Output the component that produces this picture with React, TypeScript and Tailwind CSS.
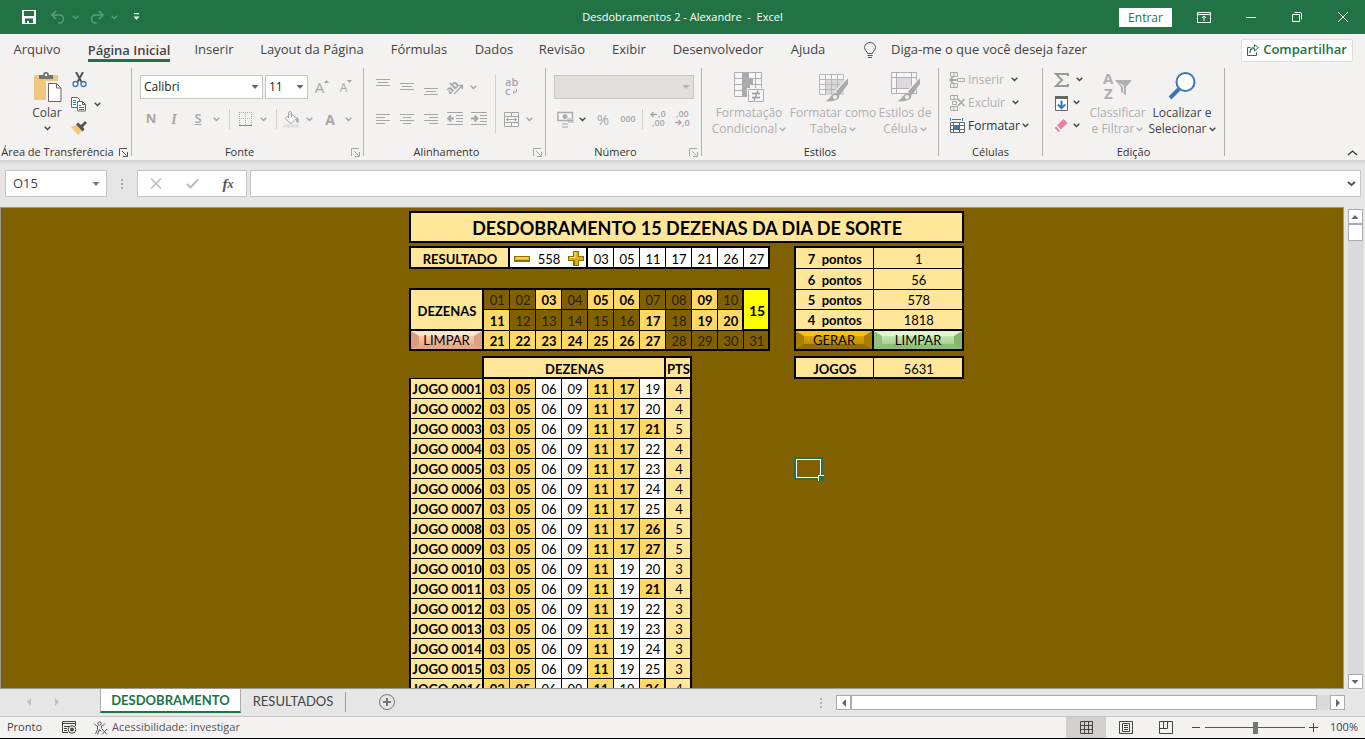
import type { ReactNode } from 'react'

const TABS = [
  { label: 'Arquivo', width: 'w-[72px]' },
  { label: 'Página Inicial', width: 'w-[112px]', active: true },
  { label: 'Inserir', width: 'w-[58px]' },
  { label: 'Layout da Página', width: 'w-[138px]' },
  { label: 'Fórmulas', width: 'w-[76px]' },
  { label: 'Dados', width: 'w-[74px]' },
  { label: 'Revisão', width: 'w-[62px]' },
  { label: 'Exibir', width: 'w-[72px]' },
  { label: 'Desenvolvedor', width: 'w-[106px]' },
  { label: 'Ajuda', width: 'w-[74px]' },
]

const RESULTADO = ['03', '05', '11', '17', '21', '26', '27']
const ESCOLHIDAS = [3, 5, 6, 9, 11, 17, 19, 20, 21, 22, 23, 24, 25, 26, 27]

// every game starts with 03 05 06 09 11
const JOGOS = [
  ['17', '19', 4],
  ['17', '20', 4],
  ['17', '21', 5],
  ['17', '22', 4],
  ['17', '23', 4],
  ['17', '24', 4],
  ['17', '25', 4],
  ['17', '26', 5],
  ['17', '27', 5],
  ['19', '20', 3],
  ['19', '21', 4],
  ['19', '22', 3],
  ['19', '23', 3],
  ['19', '24', 3],
  ['19', '25', 3],
  ['19', '26', 4],
] as const

const pad = (n: number, size = 2) => String(n).padStart(size, '0')

function Chevron({ className = 'text-[#444]' }: { className?: string }) {
  return (
    <svg className={`shrink-0 ${className}`} width="7" height="5" viewBox="0 0 7 5" fill="none" stroke="currentColor" strokeWidth="1.4">
      <path d="M.7.8 3.5 3.6 6.3.8" />
    </svg>
  )
}

function Triangle({ dir = 'down', className = 'text-[#666]' }: { dir?: 'up' | 'down' | 'left' | 'right'; className?: string }) {
  const paths = {
    up: 'M0.5 6h7L4 2z',
    down: 'M0.5 2h7L4 6z',
    left: 'M6 0v8L2 4z',
    right: 'M2 0v8l4-4z',
  }
  return (
    <svg className={className} width="8" height="8" viewBox="0 0 8 8" fill="currentColor">
      <path d={paths[dir]} />
    </svg>
  )
}

function Tool({ label, className = 'w-6', children }: { label: string; className?: string; children: ReactNode }) {
  return (
    <button type="button" aria-label={label} className={`flex h-6 shrink-0 items-center justify-center text-[#a6a6a6] ${className}`}>
      {children}
    </button>
  )
}

function Group({ label, className, launcher, dark, children }: {
  label: string
  className: string
  launcher?: boolean
  dark?: boolean
  children: ReactNode
}) {
  return (
    <section className={`flex h-[92px] shrink-0 ${className}`}>
      <div className="flex min-w-0 flex-1 flex-col">
        <div className="h-[76px]">{children}</div>
        <div className="flex h-4 items-center">
          <span className={`flex-1 whitespace-nowrap text-center text-[11px] text-[#333] ${launcher ? 'pr-1' : ''}`}>{label}</span>
          {launcher && (
            <button type="button" aria-label={`Opções de ${label}`} className={`mr-[3px] ${dark ? 'text-[#555]' : 'text-[#a6a6a6]'}`}>
              <svg width="9" height="9" viewBox="0 0 9 9" fill="none" stroke="currentColor">
                <path d="M.5 8V.5H8M3 3l4.500 4.500M8.500 4v4.500H4" />
              </svg>
            </button>
          )}
        </div>
      </div>
      <div className="h-[88px] w-px bg-[#b3b0ad]" />
    </section>
  )
}

function Lines({ kind }: { kind: 'top' | 'middle' | 'bottom' | 'left' | 'center' | 'right' }) {
  const paths = {
    top: 'M1 .5h14M3 3.500h10M1 6.500h14',
    middle: 'M1 4.500h14M3 7.500h10M1 10.500h14',
    bottom: 'M1 9.500h14M3 12.500h10M1 15.500h14',
    left: 'M1 3.500h14M1 6.500h9M1 9.500h14M1 12.500h9',
    center: 'M1 3.500h14M4 6.500h8M1 9.500h14M4 12.500h8',
    right: 'M1 3.500h14M6 6.500h9M1 9.500h14M6 12.500h9',
  }
  return (
    <svg width="16" height="16" viewBox="0 0 16 16" stroke="currentColor" fill="none">
      <path d={paths[kind]} />
    </svg>
  )
}

function Indent({ back }: { back?: boolean }) {
  return (
    <svg width="16" height="16" viewBox="0 0 16 16" stroke="currentColor" fill="none">
      <path d="M0 1.500h16M9 4.500h7M9 7.500h7M9 10.500h7M0 13.500h16" />
      <path strokeWidth="1.800" d={back ? 'M7 7.500H1M4 4.500l-3 3 3 3' : 'M0 7.500h6M3.500 4.500l3 3-3 3'} />
    </svg>
  )
}

function TitleBar() {
  return (
    <header className="flex h-[34px] shrink-0 items-center bg-[#217346] text-white">
      <div className="flex w-[475px] shrink-0 items-center pl-[22px]">
        <button type="button" aria-label="Salvar">
          <svg width="14" height="14" viewBox="0 0 14 14">
            <path fill="#fff" fillRule="evenodd" d="M0 0h14v14H0zM2 1v5h10V1zM3 8.500V13h2v-2h2v2h4V8.500z" />
          </svg>
        </button>
        <button type="button" aria-label="Desfazer" className="ml-[14px] flex items-center gap-1.5 text-[#5b9b78]">
          <svg width="16" height="14" viewBox="0 0 16 14" fill="none" stroke="currentColor" strokeWidth="1.600">
            <path d="M6 1 2 5l4 4M2 5h7.500a4 4 0 0 1 0 8H8" />
          </svg>
          <Chevron className="text-[#5b9b78]" />
        </button>
        <button type="button" aria-label="Refazer" className="ml-[10px] flex items-center gap-1.5 text-[#5b9b78]">
          <svg width="16" height="14" viewBox="0 0 16 14" fill="none" stroke="currentColor" strokeWidth="1.600">
            <path d="m10 1 4 4-4 4M14 5H6.500a4 4 0 0 0 0 8H8" />
          </svg>
          <Chevron className="text-[#5b9b78]" />
        </button>
        <button type="button" aria-label="Personalizar" className="ml-[15px]">
          <svg width="7" height="8" viewBox="0 0 7 8" fill="#fff">
            <path d="M1 0h5v1.200H1zM.5 3.500h6L3.500 7z" />
          </svg>
        </button>
      </div>
      <h1 className="flex-1 whitespace-pre text-center text-[11px]">Desdobramentos 2 - Alexandre  -  Excel</h1>
      <div className="flex w-[475px] shrink-0 items-center justify-end">
        <button type="button" className="h-[19px] w-[53px] bg-white text-[12px] leading-[19px] text-[#217346]">Entrar</button>
        <button type="button" aria-label="Opções da faixa" className="ml-[25px]">
          <svg width="14" height="11" viewBox="0 0 14 11" fill="none" stroke="#fff">
            <path d="M.5.5h13v10H.5zM.5 2.500h13M7 9V4M4.800 6 7 3.800 9.200 6" />
          </svg>
        </button>
        <button type="button" aria-label="Minimizar" className="ml-[35px]">
          <span className="block h-px w-[10px] bg-white" />
        </button>
        <button type="button" aria-label="Restaurar" className="ml-[36px]">
          <svg width="10" height="10" viewBox="0 0 10 10" fill="none" stroke="#fff">
            <path d="M.5 2.500h7v7h-7zM2.500.5h6a1 1 0 0 1 1 1v6" />
          </svg>
        </button>
        <button type="button" aria-label="Fechar" className="mr-[17px] ml-[36px]">
          <svg width="10" height="10" viewBox="0 0 10 10" fill="none" stroke="#fff">
            <path d="m0 0 10 10M10 0 0 10" />
          </svg>
        </button>
      </div>
    </header>
  )
}

function TabBar() {
  return (
    <nav className="flex h-8 items-center pl-px text-[13px] text-[#444]">
      {TABS.map((tab) => (
        <button key={tab.label} type="button" className={`flex shrink-0 justify-center whitespace-nowrap ${tab.width}`}>
          {tab.active ? (
            <span className="border-b-[3px] border-[#217346] pt-[3px] leading-[18px] font-semibold">{tab.label}</span>
          ) : (
            tab.label
          )}
        </button>
      ))}
      <button type="button" className="ml-[19px] flex items-center gap-[15px] whitespace-nowrap">
        <svg width="12" height="17" viewBox="0 0 12 17" fill="none" stroke="#555">
          <path d="M3.500 11.500c0-2-3-3-3-6a5.500 5 0 0 1 11 0c0 3-3 4-3 6zM3.500 13.500h5M4 15.500h4" />
        </svg>
        Diga-me o que você deseja fazer
      </button>
      <button type="button" className="mr-3 ml-auto flex h-[23px] w-[112px] items-center justify-center gap-1 rounded-[2px] border border-[#e1dfdd] bg-white font-semibold text-[#217346]">
        <svg width="12" height="12" viewBox="0 0 12 12" fill="none" stroke="currentColor">
          <path d="M3.500 3.500h-3v8h9v-3M3 8.500c.5-3 2-4 4.500-4V7L11.500 3.500 7.500.7V3C4.500 3 3 5 3 8.500z" />
        </svg>
        Compartilhar
      </button>
    </nav>
  )
}

function ClipboardGroup() {
  return (
    <Group label="Área de Transferência" className="w-[132px]" launcher dark>
      <div className="flex pl-[28px]">
        <button type="button" className="flex w-[38px] flex-col items-center pt-1 text-[12px] text-[#444]">
          <svg width="30" height="31" viewBox="0 0 30 31">
            <path fill="#efc87d" d="M2 3h24v25H2z" />
            <path fill="#737373" d="M7 7V3h4a3 3 0 0 1 6 0h4v4z" />
            <circle cx="14" cy="3" r="1.200" fill="#fff" />
            <path fill="#fff" stroke="#f3f2f1" strokeWidth="2" d="M15 10h15v20H15z" />
            <path fill="#fff" stroke="#666" d="M16.500 11.500h8l4.500 4.500v13.500H16.500zM24.500 11.500V16H29" />
          </svg>
          <span className="mt-px mb-1 leading-[18px]">Colar</span>
          <Chevron />
        </button>
        <div className="ml-[3px] flex flex-col">
          <Tool label="Recortar" className="w-5">
            <svg width="15" height="16" viewBox="0 0 15 16" fill="none">
              <path stroke="#555" strokeWidth="2" d="m4 0 5.500 10M11 0 5.500 10" />
              <circle cx="3.500" cy="12" r="2.500" stroke="#3b77b6" strokeWidth="1.300" />
              <circle cx="11.500" cy="12" r="2.500" stroke="#3b77b6" strokeWidth="1.300" />
            </svg>
          </Tool>
          <div className="flex">
            <Tool label="Copiar" className="w-5">
              <svg width="16" height="15" viewBox="0 0 16 15" fill="#fff" stroke="#666">
                <path d="M.5.5h6l2 2v8h-8z" />
                <path d="M6.500 4.500h5l3 3v6.500h-8zM11.500 4.500v3h3" />
                <path stroke="#3b77b6" d="M2 3.500h3M2 5.500h3M2 7.500h3M8 8.500h2M8 10.500h5M8 12.500h5" />
              </svg>
            </Tool>
            <Tool label="Opções de cópia" className="w-4">
              <Chevron />
            </Tool>
          </div>
          <Tool label="Pincel de Formatação" className="w-5">
            <svg width="16" height="14" viewBox="0 0 16 14">
              <path fill="#efc87d" d="m0 6 5-2 6 6-4 4z" />
              <path fill="#555" d="m5 3.500 2-2 3 2.500L14 0l2 2-4 4 1.500 2.500-2 2z" />
            </svg>
          </Tool>
        </div>
      </div>
    </Group>
  )
}

function FontGroup() {
  return (
    <Group label="Fonte" className="w-[232px]" launcher>
      <div className="flex flex-col gap-2 pt-[7px] pl-2">
        <div className="flex items-center">
          <button type="button" className="flex h-6 w-[123px] items-center justify-between border border-[#c8c6c4] bg-white px-[3px] text-[12px] text-[#222]">
            Calibri <Triangle />
          </button>
          <button type="button" className="ml-0.5 flex h-6 w-[43px] items-center justify-between border border-[#c8c6c4] bg-white px-[3px] text-[12px] text-[#222]">
            11 <Triangle />
          </button>
          <Tool label="Aumentar fonte" className="ml-0.5 w-6">
            <span className="text-[15px]">A</span>
            <svg className="mb-3" width="5" height="3" viewBox="0 0 5 3" fill="currentColor"><path d="M0 3h5L2.500 0z" /></svg>
          </Tool>
          <Tool label="Diminuir fonte" className="w-6">
            <span className="mt-0.5 text-[12px]">A</span>
            <svg className="mb-3" width="5" height="3" viewBox="0 0 5 3" fill="currentColor"><path d="M0 0h5L2.500 3z" /></svg>
          </Tool>
        </div>
        <div className="flex items-center">
          <Tool label="Negrito" className="w-[22px]"><b className="text-[13px]">N</b></Tool>
          <Tool label="Itálico"><i className="font-['Liberation_Serif',serif] text-[14px] font-bold">I</i></Tool>
          <Tool label="Sublinhado"><u className="text-[13px] font-semibold">S</u></Tool>
          <Tool label="Opções de sublinhado" className="w-3"><Chevron className="text-[#a6a6a6]" /></Tool>
          <span className="mx-[7px] h-5 w-px bg-[#d0cecc]" />
          <Tool label="Bordas" className="w-4">
            <svg width="13" height="14" viewBox="0 0 13 14" fill="none" stroke="#aaa">
              <path strokeDasharray="1 1" d="M.5 0v13M6.500 0v13M12.500 0v13M0 .5h13M0 6.500h13" />
              <path stroke="#888" d="M0 13.500h13" />
            </svg>
          </Tool>
          <Tool label="Opções de bordas" className="w-5"><Chevron className="text-[#a6a6a6]" /></Tool>
          <span className="mr-1 ml-[3px] h-5 w-px bg-[#d0cecc]" />
          <Tool label="Cor de preenchimento" className="w-5">
            <svg width="16" height="17" viewBox="0 0 16 17" fill="none" stroke="#aaa">
              <path fill="#f8f6f8" d="m2 7.500 6-5 5.500 5L8 12.500zM5.500 7V2a1.500 1.500 0 0 1 3 0v4" />
              <path fill="#aaa" d="M14 6.500c2 2 1.500 5 .5 5s-1-2-.5-5z" />
              <path stroke="#e1dfdd" strokeWidth="3" d="M0 15h16" />
            </svg>
          </Tool>
          <Tool label="Opções de preenchimento" className="w-4"><Chevron className="text-[#a6a6a6]" /></Tool>
          <Tool label="Cor da fonte" className="ml-px w-6"><b className="text-[14px]">A</b></Tool>
          <Tool label="Opções de cor" className="w-3"><Chevron className="text-[#a6a6a6]" /></Tool>
        </div>
      </div>
    </Group>
  )
}

function AlignGroup() {
  return (
    <Group label="Alinhamento" className="w-[182px]" launcher>
      <div className="flex pt-[7px] pl-[7px]">
        <div className="flex w-[124px] flex-col gap-2">
          <div className="flex">
            <Tool label="Alinhar acima"><Lines kind="top" /></Tool>
            <Tool label="Alinhar ao meio"><Lines kind="middle" /></Tool>
            <Tool label="Alinhar abaixo"><Lines kind="bottom" /></Tool>
            <Tool label="Orientação">
              <svg className="overflow-visible" width="18" height="17" viewBox="0 0 18 17" fill="none" stroke="currentColor">
                <text x="-1" y="12" fontSize="11" fontWeight="700" fill="currentColor" stroke="none" transform="rotate(-45 6 8)">ab</text>
                <path strokeWidth="1.300" d="m8 15 8.500-8.500M12.500 6.500h4V10" />
              </svg>
            </Tool>
            <Tool label="Opções de orientação" className="w-3"><Chevron className="text-[#a6a6a6]" /></Tool>
          </div>
          <div className="flex">
            <Tool label="Alinhar à esquerda"><Lines kind="left" /></Tool>
            <Tool label="Centralizar"><Lines kind="center" /></Tool>
            <Tool label="Alinhar à direita"><Lines kind="right" /></Tool>
            <Tool label="Diminuir recuo"><Indent back /></Tool>
            <Tool label="Aumentar recuo"><Indent /></Tool>
          </div>
        </div>
        <span className="h-[58px] w-px bg-[#d0cecc]" />
        <div className="flex flex-col gap-2 pl-[3px]">
          <Tool label="Quebrar texto">
            <svg className="overflow-visible" width="13" height="18" viewBox="0 0 13 18" fill="none" stroke="currentColor">
              <text x="0" y="8" fontSize="11" fontWeight="600" fill="currentColor" stroke="none">ab</text>
              <text x="0" y="17" fontSize="11" fontWeight="600" fill="currentColor" stroke="none">c</text>
              <path d="M11.500 11v3H8M9.500 12.500 8 14l1.500 1.500" />
            </svg>
          </Tool>
          <div className="flex">
            <Tool label="Mesclar e centralizar">
              <svg width="15" height="15" viewBox="0 0 15 15" fill="none" stroke="currentColor">
                <path d="M.5.5h14v14H.5zM.5 4.500h14M.5 10.500h14M7.500.5v4M7.500 10.500v4M2.500 7.500h10M4.500 5.500l-2 2 2 2M10.500 5.500l2 2-2 2" />
              </svg>
            </Tool>
            <Tool label="Opções de mesclagem" className="w-3"><Chevron className="text-[#a6a6a6]" /></Tool>
          </div>
        </div>
      </div>
    </Group>
  )
}

function NumberGroup() {
  return (
    <Group label="Número" className="w-[156px]" launcher>
      <div className="flex flex-col gap-2 pt-[7px] pl-2">
        <button type="button" aria-label="Formato de número" className="flex h-6 w-[140px] items-center justify-end border border-[#c8c6c4] bg-[#e1dfdd] pr-[3px]">
          <Triangle className="text-[#b5b3b1]" />
        </button>
        <div className="flex items-center">
          <Tool label="Contabilização" className="w-[22px]">
            <svg width="17" height="17" viewBox="0 0 17 17" fill="none" stroke="#aaa">
              <path strokeWidth="1.500" fill="#f8f6f8" d="M1 1.500h14.500v8H1z" />
              <circle cx="8" cy="5.500" r="2" fill="#aaa" />
              <path stroke="#ccc" strokeWidth="2" d="M10 8h6M11 11h6M5 13h6M5 16h6" />
            </svg>
          </Tool>
          <Tool label="Opções de moeda" className="w-3"><Chevron /></Tool>
          <Tool label="Porcentagem" className="w-[30px]"><span className="text-[15px]">%</span></Tool>
          <Tool label="Milhares" className="w-5"><span className="text-[9px] font-semibold">000</span></Tool>
          <span className="mr-[3px] ml-1 h-5 w-px bg-[#d0cecc]" />
          <Tool label="Aumentar casas decimais">
            <svg className="overflow-visible" width="15" height="16" viewBox="0 0 15 16" fill="none" stroke="currentColor">
              <text x="7" y="6" fontSize="9" fontWeight="600" fill="currentColor" stroke="none">,0</text>
              <text x="1" y="15" fontSize="9" fontWeight="600" fill="currentColor" stroke="none">,00</text>
              <path strokeWidth="1.300" d="M6 3.500H0M2.500 1 0 3.500 2.500 6" />
            </svg>
          </Tool>
          <Tool label="Diminuir casas decimais">
            <svg className="overflow-visible" width="15" height="16" viewBox="0 0 15 16" fill="none" stroke="currentColor">
              <text x="1" y="6" fontSize="9" fontWeight="600" fill="currentColor" stroke="none">,00</text>
              <text x="7" y="15" fontSize="9" fontWeight="600" fill="currentColor" stroke="none">,0</text>
              <path strokeWidth="1.300" d="M0 11.500h6M3.500 9 6 11.500 3.500 14" />
            </svg>
          </Tool>
        </div>
      </div>
    </Group>
  )
}

function BigTool({ lines, className, dark, children }: { lines: [string, string]; className: string; dark?: boolean; children: ReactNode }) {
  return (
    <button type="button" className={`flex shrink-0 flex-col items-center pt-1 text-[12px] leading-4 whitespace-nowrap ${className} ${dark ? 'text-[#444]' : 'text-[#b1afad]'}`}>
      <span className="flex h-[33px] items-start">{children}</span>
      <span>{lines[0]}</span>
      <span className="flex items-center gap-0.5">
        {lines[1]} <Chevron className={dark ? 'text-[#444]' : 'text-[#b1afad]'} />
      </span>
    </button>
  )
}

function Brush() {
  return (
    <>
      <path stroke="#f3f2f1" strokeWidth="6" d="M18 22 31 8" />
      <path fill="#aaa" stroke="none" d="M30 6v6l-8 11-4-3.500zM17 21c4-1 6 3 3 6-3 2-9 3-13 2 5-1 5-6 10-8z" />
      <circle cx="17" cy="25" r="2" fill="#f3f2f1" stroke="none" />
    </>
  )
}

function StylesGroup() {
  return (
    <Group label="Estilos" className="w-[237px]">
      <div className="flex pl-[5px]">
        <BigTool lines={['Formatação', 'Condicional']} className="w-[84px]">
          <svg width="31" height="31" viewBox="0 0 31 31" fill="#f8f4f8" stroke="#b0aeb0">
            <path d="M.5.5h27v24H.5zM.5 6.500h27M.5 12.500h27M.5 18.500h27M8.500.5v24M14.500.5v24M21.500.5v24" />
            <path fill="#aaa" stroke="none" d="M8 1h6v5H8zM8 7h11v5H8zM8 13h8v5H8zM8 19h5v5H8z" />
            <path stroke="#f3f2f1" strokeWidth="3" d="M14.500 17.500h15v12h-15z" />
            <path d="M14.500 17.500h15v12h-15z" />
            <path stroke="#999" strokeWidth="1.300" d="M18 21.500h8M18 25.500h8M24 18.500l-4 10" />
          </svg>
        </BigTool>
        <BigTool lines={['Formatar como', 'Tabela']} className="w-[84px]">
          <svg width="31" height="31" viewBox="0 0 31 31" fill="#f8f4f8" stroke="#b8b6b8">
            <path d="M1.500 2.500h24v20h-24z" />
            <path fill="#d8d6d8" stroke="none" d="M8 8h18v15H8z" />
            <path d="M1.500 7.500h24M1.500 12.500h24M1.500 17.500h24M7.500 2.500v20M13.500 2.500v20M19.500 2.500v20" />
            <Brush />
          </svg>
        </BigTool>
        <BigTool lines={['Estilos de', 'Célula']} className="w-[60px]">
          <svg width="31" height="31" viewBox="0 0 31 31" fill="#f8f4f8" stroke="#b0aeb0">
            <path d="M1.500.5h25v21h-25zM1.500 5.500h25M1.500 16.500h25M6.500.5v21M21.500.5v21" />
            <path fill="#ddd8dd" stroke="none" d="M7 6h14v10H7z" />
            <Brush />
          </svg>
        </BigTool>
      </div>
    </Group>
  )
}

function CellsGroup() {
  return (
    <Group label="Células" className="w-[104px]">
      <div className="flex flex-col items-start pl-[10px] text-[12px]">
        <button type="button" className="flex h-[23px] items-center gap-0.5 text-[#b1afad]">
          <svg width="17" height="16" viewBox="0 0 17 16" fill="none" stroke="#aaa">
            <path d="M1.500.5h7v4h-7zM5 .5v4M1.500 11.500h7v4h-7zM5 11.500v4M8.500 6.500h7v3h-7z" />
            <path strokeWidth="1.800" d="M8 8H1M4 5 1 8l3 3" />
          </svg>
          <span className="mr-[5px]">Inserir</span>
          <Chevron />
        </button>
        <button type="button" className="flex h-[23px] items-center gap-0.5 text-[#b1afad]">
          <svg width="17" height="16" viewBox="0 0 17 16" fill="none" stroke="#aaa">
            <path d="M1.500.5h7v4h-7zM5 .5v4M1.500 11.500h7v4h-7zM5 11.500v4M3.500 6.500h4v3h-4z" />
            <path strokeWidth="1.800" d="m9 4 6.500 7M15.500 4 9 11" />
          </svg>
          <span className="mr-[5px]">Excluir</span>
          <Chevron />
        </button>
        <button type="button" className="flex h-[23px] items-center gap-0.5 text-[#333]">
          <svg width="17" height="16" viewBox="0 0 17 16" fill="none" stroke="#666">
            <path fill="#fff" d="M1.500 4.500h14v10h-14zM1.500 7.500h14M1.500 11.500h14M4.500 4.500v10M10.500 4.500v10" />
            <path fill="#3b77b6" stroke="none" d="M4 7h6v5H4z" />
            <path stroke="#3b77b6" d="M1.500 0v3M13.500 0v3M3 1.500h9" />
          </svg>
          <span>Formatar</span>
          <Chevron />
        </button>
      </div>
    </Group>
  )
}

function EditGroup() {
  return (
    <Group label="Edição" className="w-[182px]">
      <div className="flex">
        <div className="flex w-[43px] flex-col pl-[10px]">
          <button type="button" aria-label="AutoSoma" className="flex h-[23px] items-center gap-1.5">
            <svg width="17" height="16" viewBox="0 0 17 16" fill="none" stroke="#999" strokeWidth="2">
              <path d="M15 4V2H3l6 6-6 6h12v-2" />
            </svg>
            <Chevron />
          </button>
          <button type="button" aria-label="Preencher" className="flex h-[23px] items-center gap-1">
            <svg width="16" height="16" viewBox="0 0 16 16" fill="none">
              <path fill="#fff" stroke="#666" d="M2.500 1.500h12v14h-12z" />
              <path fill="#666" d="M2 1h13v3H2z" />
              <path stroke="#3b77b6" strokeWidth="2" d="M8.500 5.500V13M4.800 9.500l3.700 3.700 3.700-3.700" />
            </svg>
            <Chevron />
          </button>
          <button type="button" aria-label="Limpar" className="flex h-[23px] items-center gap-1">
            <svg width="16" height="16" viewBox="0 0 16 16">
              <path fill="#e8839b" d="m10.500 1 4 4L8 11.500l-4-4zM3 8.500l4 4L5.500 14l-4-4z" />
            </svg>
            <Chevron />
          </button>
        </div>
        <BigTool lines={['Classificar', 'e Filtrar']} className="w-[63px]">
          <svg width="30" height="30" viewBox="0 0 30 30" fill="none">
            <g fill="#b0aeb0" fontSize="15" fontWeight="700">
              <text x="0" y="12">A</text>
              <text x="1" y="27">Z</text>
            </g>
            <path fill="#b0aeb0" d="M12 8h17l-6 7v8l-5-3v-5z" />
            <path fill="#f3f2f1" d="m15 10 5 5v5l1 1v-7z" />
          </svg>
        </BigTool>
        <BigTool lines={['Localizar e', 'Selecionar']} className="w-[66px]" dark>
          <svg width="28" height="28" viewBox="0 0 28 28" fill="none" stroke="#3b77b6">
            <path strokeWidth="4" d="m2 26 9-9" />
            <circle cx="17.500" cy="10" r="9" strokeWidth="2" fill="#fff" />
          </svg>
        </BigTool>
      </div>
    </Group>
  )
}

function Ribbon() {
  return (
    <div className="shrink-0 bg-[#f3f2f1]">
      <TabBar />
      <div className="flex pt-0.5">
        <ClipboardGroup />
        <FontGroup />
        <AlignGroup />
        <NumberGroup />
        <StylesGroup />
        <CellsGroup />
        <EditGroup />
        <button type="button" aria-label="Recolher faixa" className="mr-[7px] mb-1 ml-auto self-end">
          <svg width="11" height="6" viewBox="0 0 11 6" fill="none" stroke="#333" strokeWidth="1.300">
            <path d="m1 5 4.500-4L10 5" />
          </svg>
        </button>
      </div>
    </div>
  )
}

function FormulaBar() {
  return (
    <div className="flex h-[47px] shrink-0 items-center bg-linear-to-b from-[#cfcfcf] to-[#e6e6e6] to-10% pr-1 pl-[5px]">
      <button type="button" aria-label="Caixa de nome" className="flex h-[27px] w-[102px] items-center justify-between border border-[#c6c6c6] bg-white pr-1.5 pl-[7px] text-[13px] text-[#444]">
        O15 <Triangle className="text-[#777]" />
      </button>
      <span className="flex w-[30px] flex-col items-center gap-0.5">
        <i className="size-0.5 bg-[#aaa]" />
        <i className="size-0.5 bg-[#aaa]" />
        <i className="size-0.5 bg-[#aaa]" />
      </span>
      <div className="flex h-[27px] w-[110px] items-center border border-[#c6c6c6] bg-white">
        <button type="button" aria-label="Cancelar" className="flex w-9 justify-center">
          <svg width="12" height="11" viewBox="0 0 12 11" stroke="#bbb" strokeWidth="1.500"><path d="m1 .5 10 10M11 .5l-10 10" /></svg>
        </button>
        <button type="button" aria-label="Inserir" className="flex w-9 justify-center">
          <svg width="13" height="11" viewBox="0 0 13 11" fill="none" stroke="#bbb" strokeWidth="2"><path d="m1 6 3.500 3.500L12 1.500" /></svg>
        </button>
        <button type="button" aria-label="Inserir função" className="flex w-9 justify-center font-['Liberation_Serif',serif] text-[15px] leading-4 font-bold text-[#555] italic">
          f<span className="text-[12px]">x</span>
        </button>
      </div>
      <div className="ml-[3px] flex h-[27px] min-w-0 flex-1 items-center border border-[#c6c6c6] bg-white pr-1">
        <input aria-label="Barra de fórmulas" className="h-full min-w-0 flex-1 px-2 outline-none" />
        <svg width="9" height="6" viewBox="0 0 9 6" fill="none" stroke="#555" strokeWidth="2"><path d="m1 1 3.500 3L8 1" /></svg>
      </div>
    </div>
  )
}

const HEAD = 'border-2 border-black bg-[#ffe699] font-bold'
const ON = 'border border-black bg-[#ffd966] font-bold'
const PLAIN = 'border border-black bg-white'
const OFF = 'border border-black text-[#2a2000]'
const BEVEL = 'block h-[18px] w-full border-x-8 border-y-[5px] leading-[8px]'

function Dezena({ n, className = '' }: { n: number; className?: string }) {
  return <td className={`${ESCOLHIDAS.includes(n) ? ON : OFF} ${className}`}>{pad(n)}</td>
}

function Pontos({ n, total, edge }: { n: number; total: number; edge: string }) {
  return (
    <>
      <th className={`border border-l-2 border-black bg-[#ffe699] font-bold whitespace-pre ${edge}`}>{`${n}  pontos`}</th>
      <td className={`border border-r-2 border-black bg-[#ffe699] ${edge}`}>{total}</td>
    </>
  )
}

function range(from: number, to: number) {
  return Array.from({ length: to - from + 1 }, (_, i) => from + i)
}

function Sheet() {
  return (
    <main className="relative min-w-0 flex-1 overflow-hidden border border-[#999] bg-[#806000] pt-[3px] pl-[408px] font-['Lato',sans-serif] text-[13px] leading-4 text-black">
      <table className="w-[555px] table-fixed border-collapse text-center [&_td]:p-0 [&_td]:pt-0.5 [&_td]:pl-0.5 [&_th]:p-0 [&_th]:pt-0.5 [&_th]:pl-px">
        <colgroup>
          <col className="w-[73px]" />
          {range(1, 12).map((n) => (
            <col key={n} className="w-[26px]" />
          ))}
          <col className="w-[78px]" />
          <col className="w-[90px]" />
        </colgroup>
        <tbody>
          <tr className="h-[30px]">
            <th colSpan={15} className={`${HEAD} text-[18px] leading-5`}>DESDOBRAMENTO 15 DEZENAS DA DIA DE SORTE</th>
          </tr>
          <tr className="h-[5px]"><td colSpan={15} /></tr>
          <tr className="h-[21px]">
            <th colSpan={2} className={HEAD}>RESULTADO</th>
            <td colSpan={3} className="border-2 border-black bg-white">
              <div className="flex items-center justify-between px-0.5">
                <button type="button" aria-label="Resultado anterior">
                  <svg width="16" height="6" viewBox="0 0 16 6">
                    <path fill="#8f7000" d="M0 0h16v6H0z" />
                    <path fill="#e8b90c" d="M1 1h14v3H1z" />
                    <path fill="#ffe680" d="M2 1.500h12v1H2z" />
                  </svg>
                </button>
                <span>558</span>
                <button type="button" aria-label="Próximo resultado">
                  <svg width="16" height="15" viewBox="0 0 16 15">
                    <path fill="#8f7000" d="M5 0h6v5h5v5h-5v5H5v-5H0V5h5z" />
                    <path fill="#e0b010" d="M6 1h4v5h5v3h-5v5H7V9H1V6h5z" />
                    <path fill="#ffe680" d="M6.500 1h1v6H2V6h4.500z" />
                  </svg>
                </button>
              </div>
            </td>
            {RESULTADO.map((n, i) => (
              <td key={n} className={`${PLAIN} border-y-2 ${i === 6 ? 'border-r-2' : ''}`}>{n}</td>
            ))}
            <td />
            <Pontos n={7} total={1} edge="border-t-2" />
          </tr>
          <tr className="h-[21px]">
            <td colSpan={13} />
            <Pontos n={6} total={56} edge="" />
          </tr>
          <tr className="h-5">
            <th rowSpan={2} className={HEAD}>DEZENAS</th>
            {range(1, 10).map((n) => <Dezena key={n} n={n} className="border-t-2" />)}
            <td rowSpan={2} className="border-2 border-black bg-[#ffff00] text-[14px] font-bold">15</td>
            <td />
            <Pontos n={5} total={578} edge="" />
          </tr>
          <tr className="h-[21px]">
            {range(11, 20).map((n) => <Dezena key={n} n={n} />)}
            <td />
            <Pontos n={4} total={1818} edge="border-b-2" />
          </tr>
          <tr className="h-5">
            <td className="border-2 border-black p-0!">
              <button type="button" className={`${BEVEL} border-t-[#fbe3d3] border-r-[#dda083] border-b-[#e5a888] border-l-[#dd9a7c] bg-linear-to-b from-[#f8cdb2] to-[#f1b08c]`}>LIMPAR</button>
            </td>
            {range(21, 31).map((n) => <Dezena key={n} n={n} className={n === 31 ? 'border-r-2 border-b-2' : 'border-b-2'} />)}
            <td />
            <td className="border-2 border-black p-0!">
              <button type="button" className={`${BEVEL} border-t-[#f5c21c] border-r-[#a87d00] border-b-[#936d00] border-l-[#a87d00] bg-linear-to-b from-[#dba400] to-[#bf8f00]`}>GERAR</button>
            </td>
            <td className="border-2 border-black p-0!">
              <button type="button" className={`${BEVEL} border-t-[#e0f6d2] border-r-[#86b56c] border-b-[#8fbc78] border-l-[#92c07a] bg-linear-to-b from-[#c5e6b0] to-[#a9d18e]`}>LIMPAR</button>
            </td>
          </tr>
          <tr className="h-[7px]"><td colSpan={15} /></tr>
          <tr className="h-[21px]">
            <td />
            <th colSpan={7} className={HEAD}>DEZENAS</th>
            <th className={`${HEAD} whitespace-nowrap`}>PTS</th>
            <td colSpan={4} />
            <th className="border-2 border-r border-black bg-[#ffe699] font-bold">JOGOS</th>
            <td className="border-2 border-l border-black bg-[#ffe699]">5631</td>
          </tr>
          {JOGOS.map(([sexta, setima, pontos], i) => (
            <tr key={i} className="h-5">
              <th className="border border-x-2 border-black bg-[#ffe699] font-bold whitespace-nowrap">JOGO {pad(i + 1, 4)}</th>
              {['03', '05', '06', '09', '11', sexta, setima].map((n) => (
                <td key={n} className={RESULTADO.includes(n) ? ON : PLAIN}>{n}</td>
              ))}
              <td className="border border-x-2 border-black bg-[#ffe699]">{pontos}</td>
            </tr>
          ))}
        </tbody>
      </table>
      {/* selected cell with its fill handle */}
      <div className="absolute top-[249px] left-[793px] h-[23px] w-[29px] border-2 border-[#217346]">
        <div className="h-full w-full border border-white" />
        <span className="absolute -right-[3px] -bottom-[3px] size-1.5 border-t border-l border-white bg-[#217346]" />
      </div>
    </main>
  )
}

const SCROLL_BUTTON = 'flex size-[15px] shrink-0 items-center justify-center border border-[#ababab] bg-white'

function VerticalScroll() {
  return (
    <div className="flex w-[21px] shrink-0 flex-col items-center pt-0.5 pr-[3px] pl-1">
      <button type="button" aria-label="Rolar para cima" className={SCROLL_BUTTON}><Triangle dir="up" /></button>
      <div className="w-[15px] flex-1 bg-[#dadada]">
        <div className="h-[17px] border border-[#ababab] bg-white" />
      </div>
      <button type="button" aria-label="Rolar para baixo" className={SCROLL_BUTTON}><Triangle dir="down" /></button>
    </div>
  )
}

function SheetTabs() {
  return (
    <div className="flex h-[27px] shrink-0 items-start">
      <div className="flex h-[26px] w-[100px] items-center gap-5 pl-[25px]">
        <Triangle dir="left" className="text-[#c0c0c0]" />
        <Triangle dir="right" className="text-[#c0c0c0]" />
      </div>
      <button type="button" className="-mt-px h-[25px] w-[141px] border-x border-b-2 border-x-[#ababab] border-b-[#217346] bg-white pt-0.5 font-['Lato',sans-serif] text-[13px] font-bold text-[#217346]">DESDOBRAMENTO</button>
      <button type="button" className="h-[25px] w-[104px] font-['Lato',sans-serif] text-[13px] text-[#444]">RESULTADOS</button>
      <span className="mt-[3px] h-5 w-px bg-[#999]" />
      <button type="button" aria-label="Nova planilha" className="mt-[5px] ml-[33px]">
        <svg width="16" height="16" viewBox="0 0 16 16" fill="none" stroke="#777">
          <circle cx="8" cy="8" r="7.500" />
          <path strokeWidth="2" d="M8 4v8M4 8h8" />
        </svg>
      </button>
      <div className="mt-1.5 mr-5 ml-auto flex w-[525px] items-center">
        <span className="mr-[14px] flex flex-col gap-0.5">
          <i className="size-0.5 bg-[#b0b0b0]" />
          <i className="size-0.5 bg-[#b0b0b0]" />
          <i className="size-0.5 bg-[#b0b0b0]" />
        </span>
        <button type="button" aria-label="Rolar para a esquerda" className={SCROLL_BUTTON}><Triangle dir="left" /></button>
        <div className="h-[15px] flex-1 bg-[#dadada] pr-[13px]">
          <div className="h-full border border-[#ababab] bg-white" />
        </div>
        <button type="button" aria-label="Rolar para a direita" className={SCROLL_BUTTON}><Triangle dir="right" /></button>
      </div>
    </div>
  )
}

function StatusBar() {
  return (
    <footer className="flex h-[23px] shrink-0 items-center border-t border-b border-t-[#c8c6c4] border-b-black bg-[#f3f2f1] text-[11px] text-[#444]">
      <span className="w-[55px] pl-[7px]">Pronto</span>
      <button type="button" aria-label="Gravar macro" className="ml-[7px]">
        <svg width="15" height="13" viewBox="0 0 15 13" fill="none" stroke="#444">
          <path d="M6 11.500H.5V.5h13V5M.5 2.500h13M2 5.500h5M2 7.500h3M2 9.500h3" />
          <circle cx="10" cy="8.500" r="3.800" />
          <circle cx="10" cy="8.500" r="1.500" fill="#444" />
        </svg>
      </button>
      <button type="button" className="ml-[16px] flex items-center gap-1 text-[#555]">
        <svg width="15" height="14" viewBox="0 0 15 14" fill="none" stroke="#555">
          <circle cx="6.500" cy="2.500" r="1.700" />
          <path d="M1 2.500c1 1.500 2 2 3.500 2.500v3.500L2.500 13M12 2.500C11 4 10 4.500 8.500 5v2.500M4.500 13.500l2-5 1.500 2M9 8l5 5.500M14 8l-5 5.500" />
        </svg>
        Acessibilidade: investigar
      </button>
      <div className="ml-auto flex h-full items-center">
        <button type="button" aria-label="Normal" className="flex h-full w-10 items-center justify-center bg-[#d2d0ce]">
          <svg width="13" height="13" viewBox="0 0 13 13" fill="none" stroke="#444"><path d="M.5.500h12v12H.5zM.5 4.500h12M.5 8.500h12M4.500.5v12M8.500.5v12" /></svg>
        </button>
        <button type="button" aria-label="Layout da Página" className="flex w-10 justify-center">
          <svg width="14" height="13" viewBox="0 0 14 13" fill="none" stroke="#444"><path d="M.5.500h13v12H.5zM3.500 2.500h7v8h-7zM5 4.500h4M5 6.500h4M5 8.500h4" /></svg>
        </button>
        <button type="button" aria-label="Quebra de página" className="flex w-10 justify-center">
          <svg width="14" height="13" viewBox="0 0 14 13" fill="none" stroke="#444"><path d="M.5.500h13v12H.5zM.5 7.500h8v-7M4.500.5v7" /></svg>
        </button>
        <button type="button" aria-label="Reduzir" className="ml-[6px] flex w-[9px]"><span className="h-px w-2 bg-[#444]" /></button>
        <input
          type="range"
          aria-label="Zoom"
          min={10}
          max={190}
          defaultValue={100}
          className="mx-1 h-3 w-[100px] appearance-none bg-[linear-gradient(#555,#555)] bg-[length:100%_1px] bg-center bg-no-repeat [&::-webkit-slider-thumb]:h-3 [&::-webkit-slider-thumb]:w-[5px] [&::-webkit-slider-thumb]:appearance-none [&::-webkit-slider-thumb]:bg-[#767676]"
        />
        <button type="button" aria-label="Ampliar">
          <svg width="9" height="9" viewBox="0 0 9 9" stroke="#444"><path d="M4.500 0v9M0 4.500h9" /></svg>
        </button>
        <span className="w-[47px] pr-[7px] text-right">100%</span>
      </div>
    </footer>
  )
}

export default function App() {
  return (
    <div className="flex h-screen flex-col overflow-hidden bg-[#e6e6e6] font-['Open_Sans',sans-serif]">
      <TitleBar />
      <Ribbon />
      <FormulaBar />
      <div className="flex min-h-0 flex-1">
        <Sheet />
        <VerticalScroll />
      </div>
      <SheetTabs />
      <StatusBar />
    </div>
  )
}
